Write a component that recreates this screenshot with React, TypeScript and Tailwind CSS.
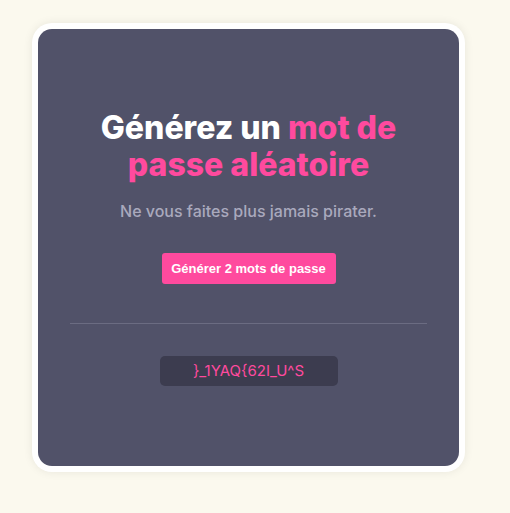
export default function App() {
  return (
    <div className="w-[510px] h-[513px] bg-[#fbf9ee] overflow-hidden">
      <div className="pt-[23px] pl-[32px]">
        <div className="w-[433px] h-[449px] p-[6px] bg-white rounded-[20px] shadow-[0_0_10px_rgba(0,0,0,0.08)]">
          <div className="h-full rounded-[14px] bg-[#515269] flex flex-col items-center px-8 pt-[80px]" style={{ fontFamily: "Inter, 'Noto Sans', sans-serif" }}>
            <h1 className="text-[32px] leading-[37px] font-extrabold text-center text-white tracking-[0px]">
              Générez un <span className="text-[#ff4a9e]">mot de</span>
              <br />
              <span className="text-[#ff4a9e]">passe aléatoire</span>
            </h1>
            <p className="mt-[18px] text-[16px] leading-[20px] font-medium text-[#a9a9bd]">Ne vous faites plus jamais pirater.</p>
            <button
              className="mt-[32px] h-[31px] w-[174px] rounded-[3px] bg-[#ff4a9e] text-white text-[13px] font-bold"
              style={{ fontFamily: "'Liberation Sans', Arial, sans-serif" }}
            >
              Générer 2 mots de passe
            </button>
            <div className="mt-[39px] w-full h-px bg-[#6b6c82]" />
            <div className="mt-[32px] w-[178px] h-[30px] rounded-[5px] bg-[#3c3c4f] flex items-center justify-center text-[15px] text-[#ff4a9e]">
              {"}_1YAQ{62I_U^S"}
            </div>
          </div>
        </div>
      </div>
    </div>
  );
}
